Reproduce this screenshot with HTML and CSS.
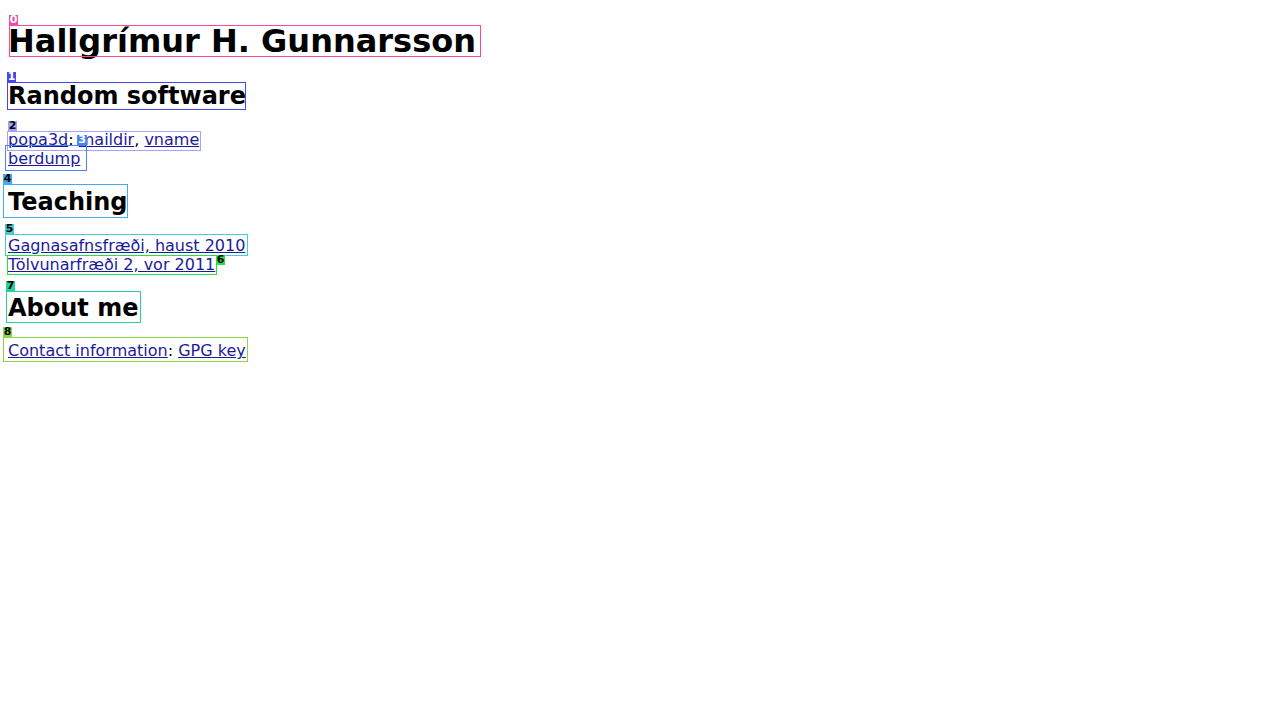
FILE: index.html
```html
<!DOCTYPE html>
<html lang="is">
<head>
<meta charset="utf-8">
<title>Hallgrímur H. Gunnarsson</title>
<link rel="stylesheet" href="styles.css">
</head>
<body>
<h1>Hallgrímur H. Gunnarsson</h1>
<h2>Random software</h2>
<p><a href="#">popa3d</a>: <a href="#">maildir</a>, <a href="#">vname</a><br><a href="#">berdump</a></p>
<h2>Teaching</h2>
<p><a href="#">Gagnasafnsfræði, haust 2010</a><br><a href="#">Tölvunarfræði 2, vor 2011</a></p>
<h2>About me</h2>
<p><a href="#">Contact information</a>: <a href="#">GPG key</a></p>

<div class="marks" aria-hidden="true">
  <div class="box b0"></div><div class="tag t0">0</div>
  <div class="box b1"></div><div class="tag t1">1</div>
  <div class="box b2"></div><div class="tag t2">2</div>
  <div class="box b3"></div><div class="tag t3">3</div>
  <div class="box b4"></div><div class="tag t4">4</div>
  <div class="box b5"></div><div class="tag t5">5</div>
  <div class="box b6"></div><div class="tag t6">6</div>
  <div class="box b7"></div><div class="tag t7">7</div>
  <div class="box b8"></div><div class="tag t8">8</div>
</div>
</body>
</html>
```

FILE: styles.css
```css
html, body {
  background: #ffffff;
}
body {
  margin: 8px;
  font-family: "DejaVu Sans", sans-serif;
  color: #000;
}
h1 {
  font-size: 32px;
  margin: 14.44px 0 21.44px;
}
h2 {
  font-size: 24px;
  margin: 19.92px 0;
}
p {
  font-size: 16px;
  margin: 16px 0;
}
a {
  color: #1b1a9c;
}

.marks {
  position: absolute;
  left: 0;
  top: 0;
  width: 0;
  height: 0;
}
.box {
  position: absolute;
  border: 1px solid;
  box-sizing: border-box;
}
.tag {
  position: absolute;
  width: 9px;
  height: 10px;
  font: bold 11px/10px "DejaVu Sans", sans-serif;
  text-align: center;
  color: #000;
  overflow: visible;
}
.b0 { left: 9px; top: 25px; width: 472px; height: 32px; border-color: #f34ba0; }
.t0 { left: 9px; top: 15px; background: #f34ba0; color: #fff; }
.b1 { left: 7px; top: 82px; width: 239px; height: 28px; border-color: #4646f0; }
.t1 { left: 7px; top: 72px; background: #4646f0; color: #fff; }
.b2 { left: 7px; top: 131px; width: 194px; height: 20px; border-color: #a4a4f6; }
.t2 { left: 8px; top: 121px; background: #a4a4f6; }
.b3 { left: 5px; top: 145px; width: 82px; height: 26px; border-color: #4b84f4; }
.t3 { left: 77px; top: 135px; width: 10px; background: #4b84f4; color: #fff; }
.b4 { left: 3px; top: 184px; width: 125px; height: 34px; border-color: #46aaf0; }
.t4 { left: 3px; top: 174px; background: #46aaf0; }
.b5 { left: 5px; top: 234px; width: 243px; height: 22px; border-color: #46cdd2; }
.t5 { left: 5px; top: 224px; background: #46cdd2; }
.b6 { left: 7px; top: 255px; width: 210px; height: 20px; border-color: #28e046; }
.t6 { left: 216px; top: 255px; background: #28e046; }
.b7 { left: 6px; top: 291px; width: 135px; height: 32px; border-color: #28d09a; }
.t7 { left: 6px; top: 281px; background: #28d09a; }
.b8 { left: 3px; top: 337px; width: 245px; height: 25px; border-color: #8ad848; }
.t8 { left: 3px; top: 327px; background: #8ad848; }
```
